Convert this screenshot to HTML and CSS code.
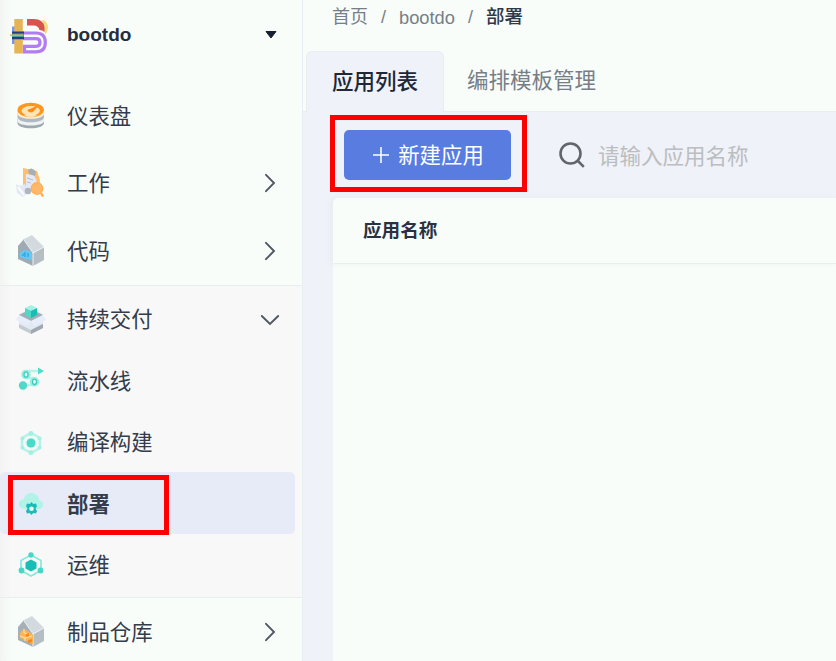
FILE: index.html
```html
<!DOCTYPE html>
<html lang="zh-CN">
<head>
<meta charset="utf-8">
<title>部署 - bootdo</title>
<link rel="stylesheet" href="styles.css">
</head>
<body>
<div class="app">
  <nav class="sidebar">
    <div class="project">
      <svg class="logo" viewBox="0 0 40 40" fill="none">
        <path d="M32 4.500q6 2 6 8-.5 5-3 7z" fill="#f0df83"/>
        <path d="M2 11.500h5V29H2z" fill="#739af0"/>
        <path d="M4.300 4h8.500v34.500H4.300z" fill="#e7b455"/>
        <path d="M17 4h7q9 0 10.500 8v5q-2-2-5-2-1-4.500-6-4.500H17z" fill="#d9534f"/>
        <path d="M13 18h13q9.300 0 9.300 9.400T26 36.800H14.500V31.300H26q4 0 4-3.800t-4-3.800H13" stroke="#b27cf7" stroke-width="3.200"/>
        <path d="M2 16.500h12v2.300H2zM2 22h12v2.300H2z" fill="#263b83"/>
        <path d="M2 18.800h12v3.200H2z" fill="#4d9a9d"/>
        <path d="M0 20.200h13" stroke="#d9ae62" stroke-width="1.500"/>
      </svg>
      <span class="project-name">bootdo</span>
      <svg class="caret" viewBox="0 0 12 8"><path d="M1 .5h10L6 7z" fill="#171f31" stroke="#171f31" stroke-linejoin="round"/></svg>
    </div>
    <div class="item">
      <svg class="icon" viewBox="0 0 32 32">
        <path d="M2.500 19v4c0 7 26.500 7 26.500 0v-4z" fill="#9ca9b2"/>
        <path d="M2.500 17v4c0 6 26.500 6 26.500 0v-4z" fill="#eef2f3"/>
        <path d="M2.500 11v6c0 7 26.500 7 26.500 0v-6z" fill="#aeb9c1"/>
        <path d="M2.500 10v3.500c0 7 26.500 7 26.500 0V10z" fill="#fff0d2"/>
        <ellipse cx="15.700" cy="10" rx="13.200" ry="7.300" fill="#ff971e"/>
        <ellipse cx="15.700" cy="10.800" rx="9.200" ry="4.800" fill="#ffe4b5"/>
        <path d="m24 5-5.500 6.500q-3 2-6-.5 0-2 3-2.200z" fill="#ff8c18"/>
        <path d="M9 15.500q6-3 13 0-6 3-13 0" fill="#ffe4b5"/>
      </svg>
      <span class="label">仪表盘</span>
    </div>
    <div class="item">
      <svg class="icon" viewBox="0 0 32 32">
        <path d="m8 1 14 3 3 9-1 8-16 2z" fill="#ffbf70"/>
        <path d="m11 7 8 1 3 7-2 9-9-2z" fill="#e4e9f5"/>
        <path d="M13 3q4-4 8 2l-1 4-6-2z" fill="#a4afb6"/>
        <path d="m12 11 6 2m-6 2 4 1" stroke="#b5c0d4" stroke-width="1.200"/>
        <path d="m1 17 4 2 5-2 3 9-5 4-6-4z" fill="#e2e8f4"/>
        <path d="m3 20 6 8" stroke="#fff" stroke-width="1.800"/>
        <circle cx="13" cy="24" r="3.300" fill="#aeb6bf"/>
        <circle cx="22" cy="21.500" r="5.800" fill="#ffb867" stroke="#ffae58" stroke-width="1.200"/>
        <path d="m26 26 2 3.500" stroke="#ffae58" stroke-width="2.500"/>
      </svg>
      <span class="label">工作</span>
      <svg class="arrow" viewBox="0 0 20 20"><path d="m6 1.800 8 8.200-8 8.200"/></svg>
    </div>
    <div class="item">
      <svg class="icon" viewBox="0 0 32 32">
        <path d="M3 11 9 4l9 13v14L3 24z" fill="#9eabb4"/>
        <path d="m9 4 8-4 12 12-10 6z" fill="#d3dadf"/>
        <path d="m18 18 11-6v13l-11 6z" fill="#b4bec3"/>
        <path d="m9 5 9 13 11-6M18 18v13" stroke="#edf2f3" fill="none"/>
        <path d="m5 18 4-3 6 1 2 3v6l-5-1-7-2z" fill="#64c9f3"/>
        <path d="m7 21 3-3v4m3-4v4" stroke="#36a7e2" stroke-width="1.500" fill="none"/>
      </svg>
      <span class="label">代码</span>
      <svg class="arrow" viewBox="0 0 20 20"><path d="m6 1.800 8 8.200-8 8.200"/></svg>
    </div>
    <div class="group">
      <div class="item sub">
        <svg class="icon" viewBox="0 0 32 32">
          <path d="m4 10 12-5 12 5v13l-12 6.500L4 23z" fill="#e3e8f1"/>
          <path d="M4 11 16 5l12 6-12 6z" fill="#a3adb6"/>
          <path d="m4 20 12 6 12-6v4l-12 6-12-6z" fill="#c4cbd1"/>
          <path d="m16 26 12-6v4l-12 6z" fill="#a0a9b2"/>
          <path d="m4 11 12 6-3 5L1 16zM28 11l-12 6 3 5 12-6z" fill="#e6edfb"/>
          <path d="m10 4 6-3 6 3-6 3z" fill="#a3f1e5"/>
          <path d="m10 4 6 3v7l-6-3z" fill="#4cdac8"/>
          <path d="m22 4-6 3v7l6-3z" fill="#16beb3"/>
        </svg>
        <span class="label">持续交付</span>
        <svg class="arrow" viewBox="0 0 20 20"><path d="m1.800 6 8.200 8 8.200-8"/></svg>
      </div>
      <div class="item sub">
        <svg class="icon" viewBox="0 0 32 32" fill="none">
          <path d="M11 6h13M11 13h8M8 20h11" stroke="#b6f4e7" stroke-width="2.500"/>
          <path d="m23 2.500 6 3.500-6 3.500z" fill="#4fdcca"/>
          <circle cx="11" cy="9.500" r="3.300" stroke="#9beee1" stroke-width="3"/>
          <circle cx="19.500" cy="16.800" r="3.300" stroke="#9beee1" stroke-width="3"/>
          <ellipse cx="11" cy="9.500" rx="2" ry="2.700" fill="#eefffb" stroke="#38cdc0" stroke-width="1.300"/>
          <ellipse cx="19.500" cy="16.800" rx="2" ry="2.700" fill="#eefffb" stroke="#38cdc0" stroke-width="1.300"/>
          <circle cx="8" cy="20.500" r="4.200" fill="#50d9c9"/>
        </svg>
        <span class="label">流水线</span>
      </div>
      <div class="item sub">
        <svg class="icon" viewBox="0 0 32 32" fill="none">
          <path d="m16 6 9 5v10l-9 5-9-5V11z" stroke="#b3f4e7" stroke-width="2.500"/>
          <g fill="#a5f0e2"><circle cx="16" cy="6.500" r="2.500"/><circle cx="16" cy="25.500" r="2.500"/><circle cx="7.500" cy="11.500" r="2"/><circle cx="24.500" cy="11.500" r="2"/><circle cx="7.500" cy="20.500" r="2"/><circle cx="24.500" cy="20.500" r="2"/></g>
          <circle cx="16" cy="16" r="6" fill="#e0faf5"/>
          <circle cx="16" cy="16" r="4.500" fill="#4bd9c8"/>
        </svg>
        <span class="label">编译构建</span>
      </div>
      <div class="item sub active">
        <svg class="icon" viewBox="0 0 32 32">
          <path d="M9 20c-7-1-7-9 0-10C11 2 23 2 24 11c6 1 5 9 0 9z" fill="#b1f3e7"/>
          <path d="m16.500 13 1.800 2 2.700-.4 1 2.700-1.500 2.200L22 22l-1 2.500-2.700-.4-1.800 2-1.800-2-2.700.4L11 22l1.500-2.500L11 17.300l1-2.700 2.700.4z" fill="#19bdb5"/>
          <circle cx="16.500" cy="19.700" r="2.300" fill="#e8fffc"/>
        </svg>
        <span class="label">部署</span>
      </div>
      <div class="item sub">
        <svg class="icon" viewBox="0 0 32 32" fill="none">
          <path d="m16 6 10 5.500v10L16 27 6 21.500v-10z" stroke="#86e9da" stroke-width="1.700"/>
          <g fill="#48d6c6"><circle cx="16" cy="6" r="2.700"/><circle cx="6.500" cy="21.500" r="2.900"/><circle cx="25.500" cy="21.500" r="2.900"/></g>
          <path d="m16 10.500 5.500 3v6l-5.500 3-5.500-3v-6z" fill="#16beb5"/>
        </svg>
        <span class="label">运维</span>
      </div>
    </div>
    <div class="item">
      <svg class="icon" viewBox="0 0 32 32">
        <path d="M3 11 9 4l9 13v14L3 24z" fill="#a5b0b8"/>
        <path d="m9 4 8-4 12 12-10 6z" fill="#d3dadf"/>
        <path d="m18 18 11-6v13l-11 6z" fill="#b4bec3"/>
        <path d="m9 5 9 13 11-6M18 18v13" stroke="#edf2f3" fill="none"/>
        <path d="m5 17 4-4 5 3 4 3v9l-13-6z" fill="#ffb454"/>
        <path d="m5 20 5 2 7-2m-7 2v3M9 13v4l4 1" stroke="#ffe2aa" fill="none"/>
        <path d="m11 18 3-1v3l-3 1zm2 6 4-1v3l-4 1z" fill="#f58a17"/>
      </svg>
      <span class="label">制品仓库</span>
      <svg class="arrow" viewBox="0 0 20 20"><path d="m6 1.800 8 8.200-8 8.200"/></svg>
    </div>
    <div class="mark mark-nav"></div>
  </nav>
  <main class="main">
    <div class="crumbs"><span>首页</span><i>/</i><span class="latin">bootdo</span><i>/</i><span class="current">部署</span></div>
    <div class="tabs"><div class="tab selected">应用列表</div><div class="tab">编排模板管理</div></div>
    <div class="toolbar">
      <button class="create">
        <svg class="plus" viewBox="0 0 18 18"><path d="M9 1v16M1 9h16" stroke="#fff" stroke-width="1.500"/></svg>
        <span>新建应用</span>
      </button>
      <div class="search">
        <svg class="glass" viewBox="0 0 28 28" fill="none" stroke="#62666c" stroke-width="2.600"><circle cx="12.500" cy="12.500" r="10"/><path d="m19.500 19.500 6.300 6.300"/></svg>
        <span>请输入应用名称</span>
      </div>
    </div>
    <div class="table"><div class="thead">应用名称</div></div>
    <div class="mark mark-create"></div>
  </main>
</div>
</body>
</html>
```
FILE: styles.css
```css
* { box-sizing: border-box; }
body {
  margin: 0;
  font-family: "Liberation Sans", "Noto Sans CJK SC", sans-serif;
  color: #343b4a;
  overflow: hidden;
}
.app { display: flex; width: 836px; height: 661px; background: #f8fdf9; overflow: hidden; }
.sidebar {
  position: relative;
  flex: none;
  width: 303px;
  border-right: 1px solid #e8eff1;
  background: linear-gradient(90deg, #f2f4f2 0, #f8fdf9 11px);
}
.project { display: flex; align-items: center; height: 69px; margin-bottom: 13px; padding: 0 25px 0 10px; }
.logo { width: 40px; height: 40px; margin-right: 17px; }
.project-name { flex: 1; font-size: 19px; font-weight: 700; color: #252d3e; }
.caret { width: 12px; height: 8px; }
.item { display: flex; align-items: center; height: 67.600px; padding: 0 22px 0 15px; }
.icon { flex: none; width: 32px; height: 32px; margin-right: 20px; }
.label { flex: 1; padding-top: 2px; font-size: 21.400px; line-height: 30px; white-space: nowrap; }
.arrow { width: 20px; height: 20px; fill: none; stroke: #505762; stroke-width: 1.900; stroke-linecap: round; }
.group {
  height: 313px;
  padding-top: 3px;
  border-top: 1px solid #e6eeee;
  border-bottom: 1px solid #e6eeee;
  background: linear-gradient(90deg, #f3f3f3 0, #f8f8f8 11px);
}
.sub { height: 61.500px; }
.sub .label { padding-top: 1px; }
.active { width: 295px; margin-top: -1px; height: 62px; background: #e7ebf8; border-radius: 5px; }
.active .label { padding-top: 3px; font-weight: 700; }
.active .icon { margin-top: 3px; }
.main { position: relative; display: flex; flex-direction: column; flex: 1; min-width: 0; background: #eff2f8; }
.crumbs {
  display: flex;
  align-items: center;
  gap: 13px;
  height: 51px;
  padding: 0 0 18px 29px;
  background: #f8fdf9;
  font-size: 18px;
  line-height: 26px;
  color: #777e88;
}
.crumbs i { font-style: normal; padding-top: 1px; }
.latin { padding-top: 2px; font-size: 18.300px; }
.current { color: #303747; font-size: 18.500px; font-weight: 500; }
.tabs { display: flex; height: 61px; padding-left: 3px; border-bottom: 1px solid #e8eef0; background: #f8fdf9; }
.tab { padding: 0 23px; font-size: 21.500px; line-height: 60px; color: #777e88; white-space: nowrap; }
.selected {
  width: 138px;
  height: 61px;
  padding: 0 25px;
  border: 1px solid #e8edf2;
  border-bottom: 0;
  border-radius: 6px 6px 0 0;
  background: #eff2f8;
  color: #202838;
  font-weight: 500;
}
.toolbar { display: flex; align-items: center; height: 86px; padding-left: 41px; }
.create {
  display: flex;
  align-items: center;
  justify-content: center;
  gap: 8px;
  width: 167px;
  height: 50px;
  padding: 0 0 0 1px;
  border: 0;
  border-radius: 5px;
  background: #587ce0;
  color: #fff;
  font: inherit;
  font-size: 21.400px;
}
.create span { padding-bottom: 3px; }
.plus { width: 18px; height: 18px; }
.search { display: flex; align-items: center; gap: 12px; margin-left: 47px; font-size: 21.500px; color: #bbbdbf; }
.search span { padding-bottom: 2px; }
.glass { width: 28px; height: 28px; }
.table { flex: 1; margin-left: 30px; border-radius: 5px 0 0; background: #f8fdf9; }
.thead {
  height: 66px;
  padding-left: 30px;
  border-bottom: 1px solid #e7eff0;
  border-radius: 5px 0 0;
  box-shadow: -2px 0 5px #dfe2e466;
  font-size: 18.600px;
  font-weight: 700;
  line-height: 65px;
  color: #2a3140;
}
.mark { position: absolute; border: 5px solid #f00; }
.mark-nav { left: 8px; top: 475px; width: 161px; height: 60px; }
.mark-create { left: 27px; top: 115px; width: 197px; height: 77px; }
```
